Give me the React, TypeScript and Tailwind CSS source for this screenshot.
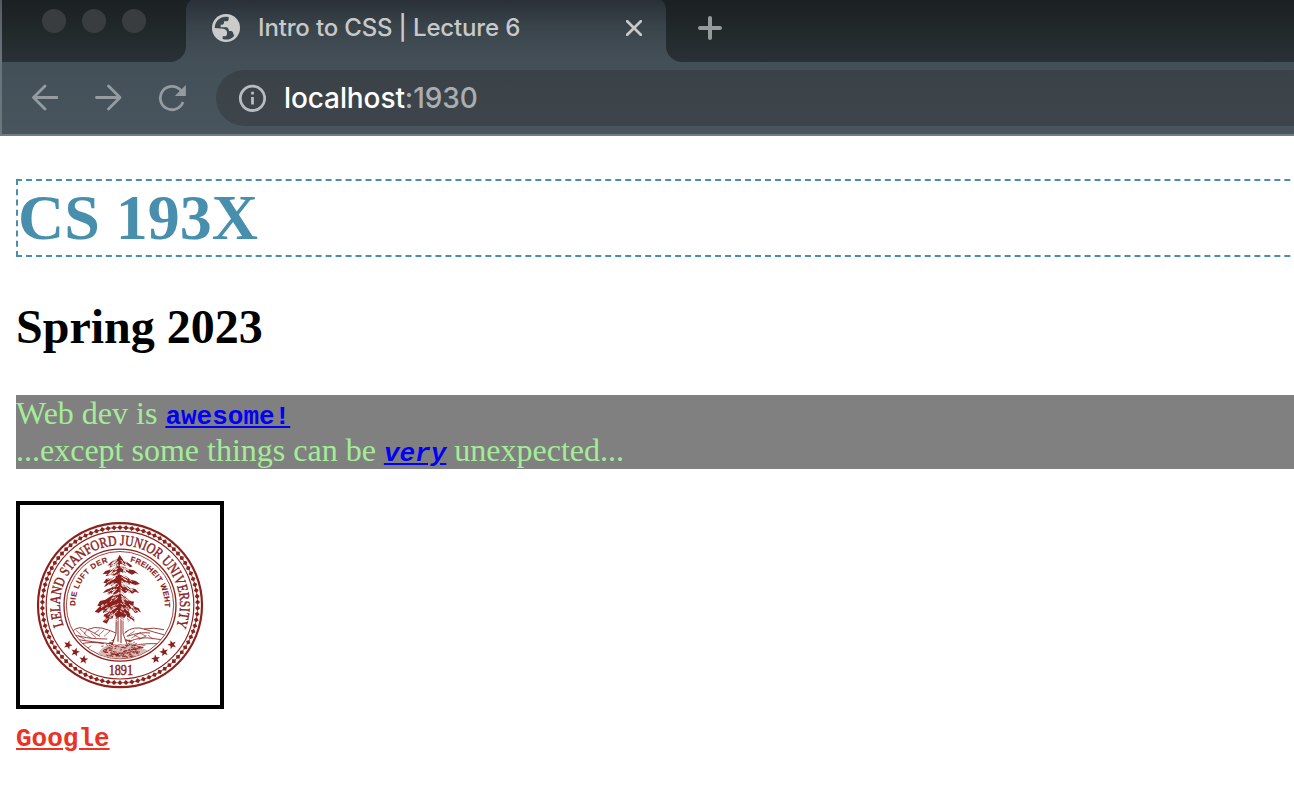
import React from "react";

const MAROON = "#8a211c";

function polar(r: number, deg: number, cx = 330, cy = 330.5) {
  const a = (deg * Math.PI) / 180;
  return [cx + r * Math.sin(a), cy - r * Math.cos(a)];
}

function arc(r: number, from: number, to: number) {
  const [x1, y1] = polar(r, from);
  const [x2, y2] = polar(r, to);
  return `M${x1} ${y1}A${r} ${r} 0 ${to - from > 180 ? 1 : 0} 1 ${x2} ${y2}`;
}

function star(cx: number, cy: number, r: number, tilt: number) {
  return Array.from({ length: 10 }, (_, i) =>
    polar(i % 2 ? r * 0.42 : r, i * 36 + tilt, cx, cy).join(",")
  ).join(" ");
}

const boughs = [
  "M329 180L322 192L306 198L292 212L302 210L298 218L312 212L322 216L332 206L342 214L354 211L360 217L368 214L352 202L340 196Z",
  "M322 214L306 222L286 228L278 238L292 236L286 244L302 240L316 242L330 232L340 234L352 232L366 239L376 234L386 238L372 226L356 223L342 212Z",
  "M322 238L308 248L288 252L280 264L290 264L282 276L296 270L306 274L318 264L330 270L342 264L356 270L364 266L376 270L390 267L378 258L362 254L346 242Z",
  "M318 268L304 278L288 284L278 294L294 290L290 300L306 296L316 300L330 290L342 296L352 290L366 296L376 290L388 295L376 282L358 278L344 268Z",
  "M316 296L302 304L286 314L270 318L262 332L270 334L254 350L266 354L278 344L280 356L294 342L306 348L320 340L332 348L344 338L356 348L364 340L374 354L390 350L394 354L386 340L370 332L372 320L358 316L342 298Z",
  "M318 334L302 344L288 350L280 364L288 366L278 380L290 386L298 372L308 370L312 358L322 368L336 364L342 370L350 360L354 380L364 372L374 382L372 368L362 360L354 346L340 338Z",
];

function Seal() {
  let seed = 17;
  const rnd = () => {
    seed = (seed * 16807) % 2147483647;
    return seed / 2147483647;
  };
  const needles = Array.from({ length: 300 }, () => {
    const t = rnd();
    const y = 194 + t * 184;
    const x = 328 + (rnd() - 0.5) * (34 + t * 90);
    return `M${x} ${y}q${x < 328 ? -4 : 4} 0 ${x < 328 ? -7 : 7} 5`;
  }).join("");
  const ground = Array.from({ length: 130 }, () => {
    const t = rnd();
    const y = 434 + t * 52;
    const half = t < 0.5 ? 24 + t * 90 : 70 - (t - 0.5) * 70;
    const x = 330 + (rnd() - 0.5) * 2 * half;
    return `M${x} ${y}l${4 + rnd() * 7} ${(rnd() - 0.5) * 7}`;
  }).join("");
  return (
    <svg viewBox="30 30 600 600" className="block h-[200px] w-[200px]" fill="none" stroke={MAROON}>
      <defs>
        <path id="outerArc" d={arc(180, -110, 112)} />
        <path id="innerLeft" d={arc(134, -91, -14)} />
        <path id="innerRight" d={arc(134, 13, 94)} />
        <clipPath id="scene"><circle cx="330" cy="330.5" r="160" /></clipPath>
      </defs>
      <circle cx="330" cy="330.5" r="246" strokeWidth="6.5" />
      <circle cx="330" cy="330.5" r="233" strokeWidth="2" />
      <circle cx="330" cy="330.5" r="221.5" strokeWidth="3.5" />
      <g fill={MAROON} stroke="none">
        {Array.from({ length: 82 }, (_, i) => {
          const [x, y] = polar(233, (i * 360) / 82);
          return (
            <path key={i} d="M-8 0L0-7.5L8 0L0 7.5Z" transform={`translate(${x} ${y}) rotate(${(i * 360) / 82})`} />
          );
        })}
      </g>
      <circle cx="330" cy="330.5" r="168" strokeWidth="4" />
      <circle cx="330" cy="330.5" r="161" strokeWidth="2.5" />
      <g fill={MAROON} stroke="none">
        <text className="font-['Liberation_Serif',serif] text-[44px]" stroke={MAROON} strokeWidth="1.3">
          <textPath href="#outerArc" textLength="694" lengthAdjust="spacingAndGlyphs">LELAND STANFORD JUNIOR UNIVERSITY</textPath>
        </text>
        <text className="font-['Liberation_Sans',sans-serif] text-[23px] font-bold" stroke={MAROON} strokeWidth="0.4">
          <textPath href="#innerLeft" textLength="176" lengthAdjust="spacing">DIE LUFT DER</textPath>
        </text>
        <text className="font-['Liberation_Sans',sans-serif] text-[23px] font-bold" stroke={MAROON} strokeWidth="0.4">
          <textPath href="#innerRight" textLength="186" lengthAdjust="spacing">FREIHEIT WEHT</textPath>
        </text>
        <text x="296" y="539" textLength="73" lengthAdjust="spacingAndGlyphs" className="font-['Liberation_Serif',serif] text-[43px]" stroke={MAROON} strokeWidth="1.4">1891</text>
        {[[174, 450, 20], [196, 471, 15], [221, 494, 8], [486, 449, -20], [462, 471, -15], [437, 492, -8]].map(([x, y, t]) => (
          <polygon key={x} points={star(x, y, 14, t)} />
        ))}
      </g>
      <g clipPath="url(#scene)" strokeWidth="2.6">
        <path d="M188 408Q206 392 228 402T270 424M232 404Q252 394 274 399T318 414M345 412Q372 392 402 402T472 422M402 402Q430 396 462 404M172 414Q206 424 230 428T292 432M184 430Q214 436 248 440T300 446M352 424Q390 410 420 414M356 440Q392 424 426 430T466 432M372 452Q412 442 462 448M208 448Q240 438 282 446" />
        <path d="M198 406l16 14m-4-18l18 16m2-12l-8 12m20-4l16 14m-34-10l20 12m-40-8l22 12m42-30l-14 10m28-8l-16 14m34-12l-18 16m-62 22l-20 14m44-8l-18 12m126-54l-22 12m44-14l-24 16m42-12l-28 18m46-8l-24 12m-60 4l-22 14m46-12l-20 14m48-8l-22 10m50-6l-26 8m-8-38l20 10m-2-16l18 10m6-4l14 12" strokeWidth="1.9" />
        <path d="M262 478Q278 452 308 444Q320 436 330 430Q344 440 360 450Q388 454 412 466Q392 486 330 491Q290 492 262 478Z" fill="#d9b9b6" stroke="none" />
        <path d={ground} strokeWidth="2.5" />
        <path d="M318 350L317 416L308 448L350 448L340 416L340 350Z" fill="#fff" stroke="none" />
        <path d="M319 350L318 416L306 450M324 355V440M333 350V444" strokeWidth="3" />
        <path d="M339 350V416L352 450" strokeWidth="2.5" />
        <g fill={MAROON} stroke="none">{boughs.map((d) => <path key={d} d={d} />)}</g>
        <path d={needles} stroke="#fff" strokeWidth="2.5" />
        <path d="M329 182L327 230L330 290L328 365" strokeWidth="3" />
      </g>
    </svg>
  );
}

function BrowserChrome() {
  return (
    <header className="flex h-[136px] flex-col border-b-2 border-[#737d81] bg-[linear-gradient(180deg,#293038_0px,#39434a_26px,#434f57_58px,#48555e_134px)] font-['Inter',sans-serif]">
      <div className="flex h-[62px] shrink-0 border-l-2 border-white/20">
        <div className="flex w-[184px] gap-4 rounded-br-2xl bg-[linear-gradient(180deg,#1b2022,#242c2e_42px,#293137)] pt-[9px] pl-10">
          <i className="size-6 rounded-full bg-[#393d3f]" />
          <i className="size-6 rounded-full bg-[#393d3f]" />
          <i className="size-6 rounded-full bg-[#393d3f]" />
        </div>
        <div className="relative flex w-[480px] items-start pt-[14px] pl-[26px]">
          <svg viewBox="0 0 5 8" className="absolute top-0 left-0 h-2 w-[5px]"><path d="M0 0H4.5Q1 3 0 8Z" fill="#1c2123" /></svg>
          <svg viewBox="0 0 5 8" className="absolute top-0 right-0 h-2 w-[5px]"><path d="M5 0H.5Q4 3 5 8Z" fill="#1c2123" /></svg>
          <svg viewBox="0 0 84 84" className="size-7 shrink-0">
            <circle cx="42" cy="42" r="42" fill="#cbcbcb" />
            <path d="M8 42A34 34 0 0 1 50 9V17Q49 22 43 22H36V27Q35 32 30 32H26V40H42Q50 41 51 51H58Q64 52 64 60L67 65A34 34 0 0 1 32 75V67H40Q45 66 45 60V55Q44 46 34 44Z" fill="#3b464d" />
          </svg>
          <span className="ml-[18px] w-[263px] text-[24px] leading-7 font-[450] tracking-[-0.16px] whitespace-nowrap text-[#c9c9c9]">Intro to CSS | Lecture 6</span>
          <svg viewBox="0 0 16 16" className="mt-[6px] ml-[105px] size-4 shrink-0" stroke="#c9c9c9" strokeWidth="2.7" strokeLinecap="round"><path d="M1.2 1.2L14.8 14.8M14.8 1.2L1.2 14.8" /></svg>
        </div>
        <div className="flex-1 rounded-bl-2xl bg-[linear-gradient(180deg,#1b2022,#242c2e_42px,#293137)] pt-4 pl-8">
          <svg viewBox="0 0 24 24" className="size-6" stroke="#969a9b" strokeWidth="4" strokeLinecap="round"><path d="M2 12H22M12 2V22" /></svg>
        </div>
      </div>
      <div className="flex h-[72px] items-start border-l-2 border-white/20 pt-2 pl-7">
        <svg viewBox="0 0 28 28" className="mt-[14px] size-7" fill="none" stroke="#949ca1" strokeWidth="2.8" strokeLinecap="round" strokeLinejoin="round"><path d="M27.500 13.500H4M15 2L3.500 13.500L15 25" /></svg>
        <svg viewBox="0 0 28 28" className="mt-[14px] ml-9 size-7" fill="none" stroke="#949ca1" strokeWidth="2.8" strokeLinecap="round" strokeLinejoin="round"><path d="M2.500 13.500H25.500M14.500 2L26 13.500L14.500 25" /></svg>
        <svg viewBox="0 0 28 28" className="mt-[14px] ml-9 size-7" fill="none" stroke="#949ca1" strokeWidth="2.8"><path d="M23 6.5A11.7 11.7 0 1 0 25 18" /><path d="M27.8 1V12H16.8Z" fill="#949ca1" stroke="none" /></svg>
        <div className="ml-[30px] flex h-14 flex-1 items-center rounded-l-full bg-[linear-gradient(180deg,#3a4247,#3e444b)] pl-[22px]">
          <svg viewBox="0 0 28 28" className="size-7" fill="none" stroke="#b8bbc0" strokeWidth="2.8"><circle cx="14.5" cy="14.3" r="12.2" /><path d="M14.500 13V20.600M14.500 7.800V10.600" /></svg>
          <span className="ml-[18px] text-[28px] leading-8 font-[450] tracking-[-0.1px] text-[#aaaeb2]"><span className="text-white">localhost</span>:1930</span>
        </div>
      </div>
    </header>
  );
}

export default function App() {
  return (
    <div className="h-[798px] w-[1294px] overflow-hidden bg-white font-['Liberation_Serif',serif] text-black">
      <BrowserChrome />
      <main className="w-[1510px] pl-4">
        <h1 className="mt-[43px] h-[78px] w-[1494px] border-2 border-dashed border-[#488fae] text-[64px] leading-[73px] font-bold text-[#488fae]">CS 193X</h1>
        <h2 className="mt-[42px] text-[48px] leading-[55px] font-bold">Spring 2023</h2>
        <p className="mt-[41px] h-[74px] bg-[#808080] text-[32px] leading-[37px] text-[#a4ed97]">
          Web dev is <a className="font-['Liberation_Mono',monospace] text-[26px] leading-none font-bold text-[#0000f5] underline">awesome!</a>
          <br />
          ...except some things can be <a className="font-['Liberation_Mono',monospace] text-[26px] leading-none font-bold text-[#0000f5] italic underline">very</a> unexpected...
        </p>
        <div className="mt-8 w-[208px] border-4 border-black"><Seal /></div>
        <a className="mt-[15px] block w-fit font-['Liberation_Mono',monospace] text-[26px] leading-[30px] font-bold text-[#ea3323] underline">Google</a>
      </main>
    </div>
  );
}
